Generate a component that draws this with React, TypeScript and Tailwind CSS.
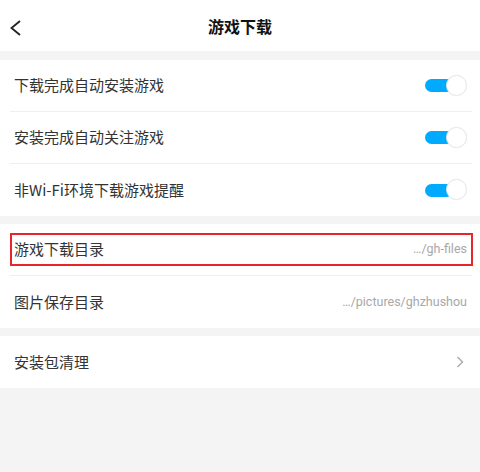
import React from 'react';

const font = { fontFamily: '"Noto Sans CJK SC", Roboto, sans-serif' };

function Toggle() {
  return (
    <div className="relative w-[42px] h-[22px] flex items-center">
      <div className="w-[28px] h-[13px] rounded-full bg-[#00aaff]" />
      <div className="absolute right-0 top-0 w-[21px] h-[21px] rounded-full bg-white border border-[#e8e8e8] shadow-[0_0_1px_rgba(0,0,0,0.08)]" />
    </div>
  );
}

function Row({ label, children, last }: { label: string; children?: React.ReactNode; last?: boolean }) {
  return (
    <div
      className={`relative h-[52px] ml-[10px] mr-[8px] pl-[4px] pr-[5px] flex items-center justify-between ${
        last ? '' : 'border-b border-[#efefef]'
      }`}
    >
      <span className="text-[15px] text-[#333]">{label}</span>
      {children}
    </div>
  );
}

export default function App() {
  return (
    <div className="w-[480px] h-[472px] bg-[#f4f4f4] flex flex-col" style={font}>
      <div className="h-[51px] bg-white relative flex items-center justify-center">
        <svg className="absolute left-[9px] top-[20px]" width="13" height="16" viewBox="0 0 13 16">
          <path d="M11 1 L2.5 8 L11 15" fill="none" stroke="#222" strokeWidth="1.8" />
        </svg>
        <span className="text-[16px] font-bold text-[#111]">游戏下载</span>
      </div>

      <div className="mt-[9px] bg-white">
        <Row label="下载完成自动安装游戏">
          <Toggle />
        </Row>
        <Row label="安装完成自动关注游戏">
          <Toggle />
        </Row>
        <Row label="非Wi-Fi环境下载游戏提醒" last>
          <Toggle />
        </Row>
      </div>

      <div className="mt-[8px] bg-white">
        <Row label="游戏下载目录">
          <span className="text-[12.5px] text-[#a8a8a8]" style={{ fontFamily: 'Roboto, sans-serif' }}>
            …/gh-files
          </span>
          <div className="absolute left-0 right-[-1px] top-[9px] h-[33px] border-2 border-[#e5262b] pointer-events-none" />
        </Row>
        <Row label="图片保存目录" last>
          <span className="text-[12.5px] text-[#a8a8a8]" style={{ fontFamily: 'Roboto, sans-serif' }}>
            …/pictures/ghzhushou
          </span>
        </Row>
      </div>

      <div className="mt-[8px] bg-white">
        <Row label="安装包清理" last>
          <svg width="8" height="12" viewBox="0 0 8 12" className="mr-[3px]">
            <path d="M1.5 1 L6.5 6 L1.5 11" fill="none" stroke="#aaa" strokeWidth="1.4" />
          </svg>
        </Row>
      </div>
    </div>
  );
}
